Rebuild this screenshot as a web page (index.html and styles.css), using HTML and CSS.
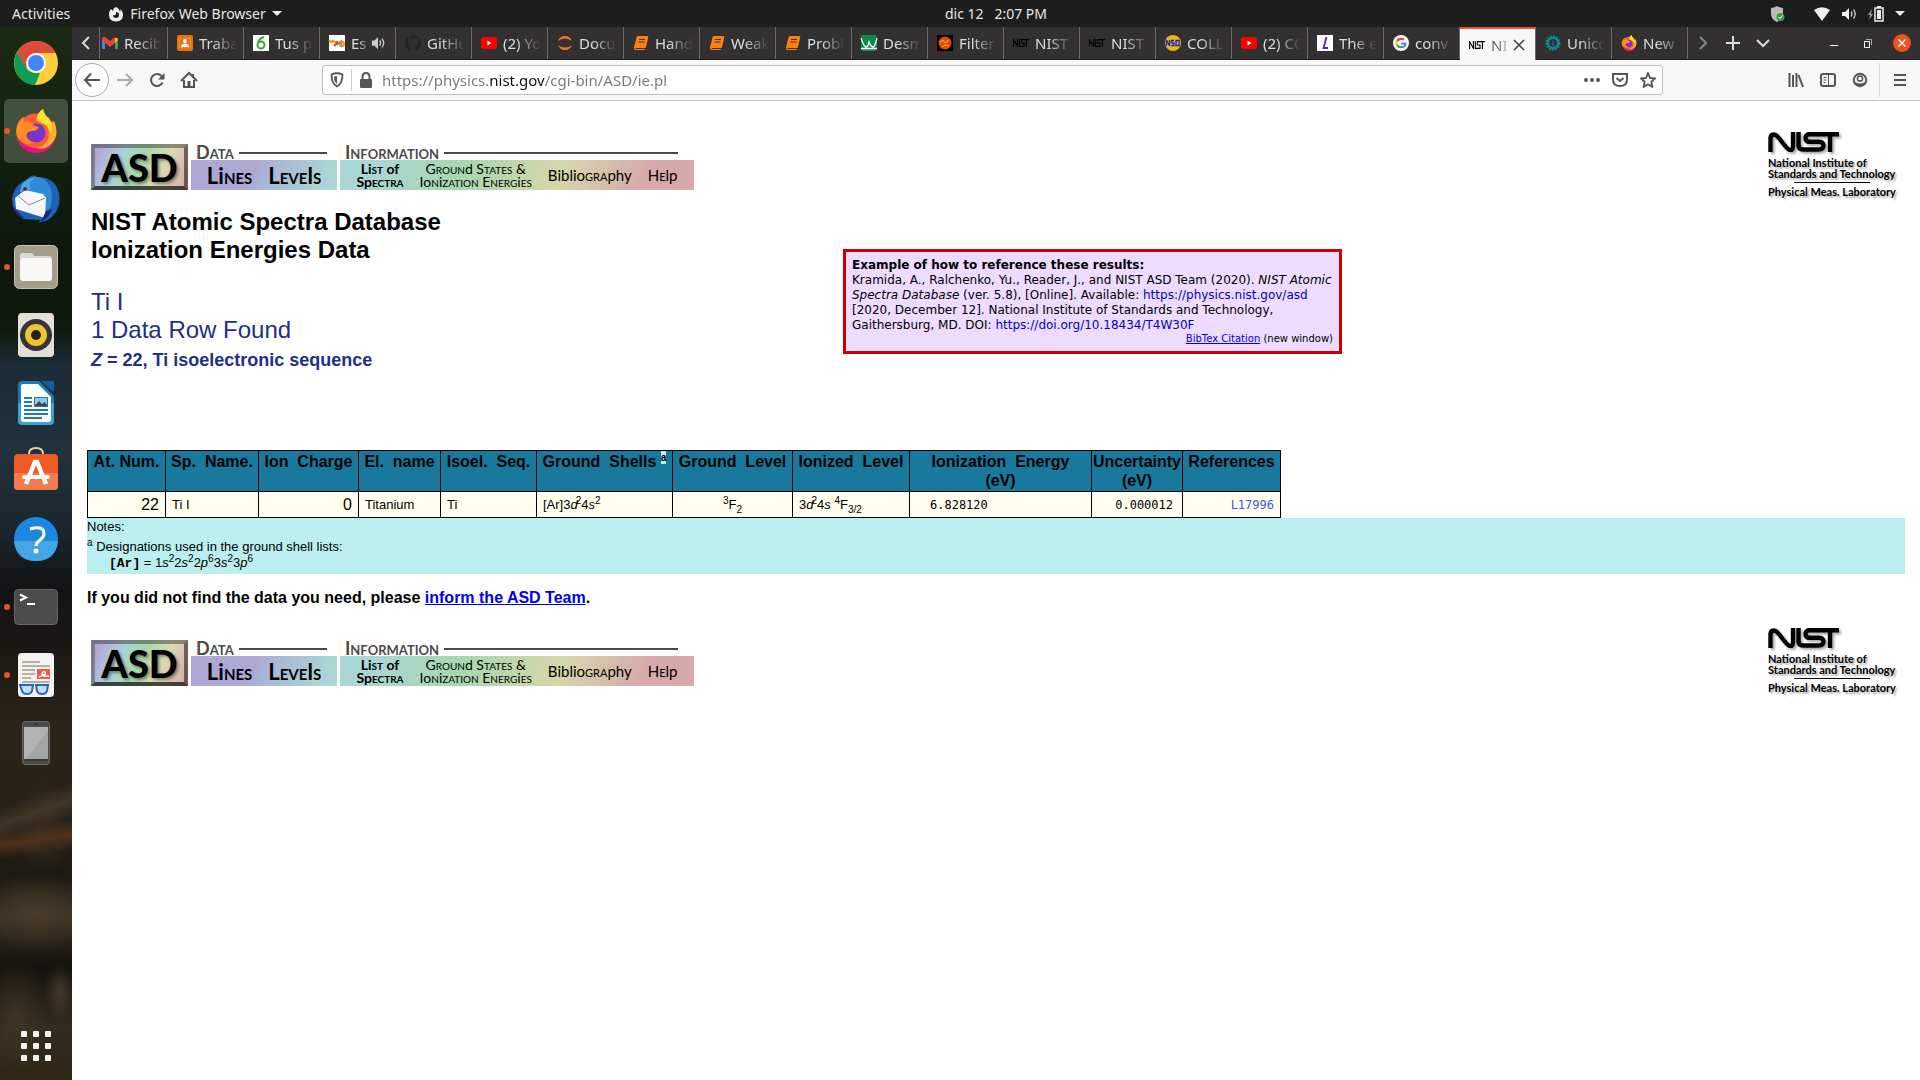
FILE: index.html
```html
<!DOCTYPE html>
<html lang="en">
<head>
<meta charset="utf-8">
<title>NIST: Ionization Energies Data</title>
<link rel="stylesheet" href="styles.css">
</head>
<body>
<svg class="defs" aria-hidden="true">
  <symbol id="nist" viewBox="0 0 72 20"><g fill="none" stroke="currentColor" stroke-width="4.4"><path d="M2.5 20V6.5Q2.5 2.5 6 2.5 8 2.5 10 5L18 15Q20.500 18 22.500 18 25 18 25 14V0"/><path d="M30.500 0V13Q30.500 17.500 35 17.500H50Q55.500 17.500 55.500 13.500T50 9.800H42Q37.500 9.800 37.500 6T42 2.300H71M62 2V20"/></g></symbol>
  <symbol id="nist-small" viewBox="0 0 16 8"><path fill="none" stroke="currentColor" stroke-width="1.100" d="M.6 8V.6L4.400 7.400V0M6.300 0V7.400H11V4H8.300V.6H16M13.400 .6V8"/></symbol>
  <symbol id="book" viewBox="0 0 16 16"><path fill="#ff7f0e" d="M5 1h9.500q1 0 .8 1l-2.300 10q-.3 1-1.300 1H3q-1 .3-.3 1h9.300l-.4 1H2.500Q.5 14.500 1 12.500L3.500 2.500Q4 1 5 1z"/><path stroke="#323031" stroke-width="1.200" d="M6 4.500h6M5.500 7h6"/></symbol>
  <symbol id="yt" viewBox="0 0 16 16"><rect y="2" width="16" height="12" rx="3" fill="#f00"/><path fill="#fff" d="M6.500 5.500l4 2.500-4 2.500z"/></symbol>
  <symbol id="flame" viewBox="0 0 44 44"><circle cx="22" cy="24" r="19.500" fill="#ff5a36"/><path fill="#e8127b" d="M3 27q4 17 19 17t19-15q-8 11-20 10T3 27z"/><path fill="#ffb028" d="M22 12Q23 3 29 0q1 6 6 9l2 5 3-2q6 13-2 22-7 8-16 5 13-3 13-14 0-10-13-13z"/><path fill="#ffe22e" d="M23 11Q23 4 29 0q1 6 6 10 5 7 2 15-2-9-9-11z"/><circle cx="22" cy="24" r="9.500" fill="#7336c9"/><path fill="#ff8b22" d="M3 17Q5 10 10 8q-1 4 1 5 4-2 7 1 1 3 7 4-1 3-6 4-6 0-7 5 1 6 9 6-9 5-15-2-6-5-3-14z"/></symbol>
</svg>

<header class="topbar">
  <nav class="topbar-left">
    <button>Activities</button>
    <button class="app"><svg class="i16" viewBox="0 0 16 16"><path fill="#eee" d="M8 1q-3 1-3 4L3 3Q1 5 1 9q0 6 7 6.500Q15 15 15 9q0-4-3-6 1 2 0 3-1-4-4-5zM8 6q3 0 3 3t-3 3-3-3q2 1 3-1z"/></svg>Firefox Web Browser <i class="caret"></i></button>
  </nav>
  <button class="clock">dic 12&nbsp;&nbsp; 2:07 PM</button>
  <div class="status">
    <svg class="i16" viewBox="0 0 16 16"><path fill="#bbb" d="M8 0q3 2 6 2v6q0 5-6 8-6-3-6-8V2q3 0 6-2z"/><circle cx="11.500" cy="11" r="4" fill="#35a345"/><path fill="none" stroke="#fff" d="M9.500 11l1.500 1.500 2.500-3"/></svg>
    <svg class="i16 wifi" viewBox="0 0 16 16"><path fill="#eee" d="M0 4q8-5.500 16 0L8 15z"/></svg>
    <svg class="i16" viewBox="0 0 16 16"><path fill="#eee" d="M1 6h3l4-4v12l-4-4H1z"/><path fill="none" stroke="#ccc" stroke-width="1.300" d="M10 5.500q2 2.500 0 5M12.500 3.500q3.500 4.500 0 9"/></svg>
    <svg class="i16" viewBox="0 0 16 16"><path fill="#999" d="M4 3L0 9h2l-1 5 4-6H3z"/><path fill="#eee" d="M9 4h4v9H9z"/><path fill="none" stroke="#eee" stroke-width="1.500" d="M7 2h8v13H7zM9 .7h4"/></svg>
    <i class="caret"></i>
  </div>
</header>

<div class="desktop">
<aside class="dock">
  <a href="#" class="launcher" aria-label="Chrome"><svg viewBox="0 0 44 44"><circle cx="22" cy="22" r="22" fill="#ffcd40"/><path fill="#dd4b3e" d="M3 11Q9 0 22 0q14 0 19.500 12H22L12 27z"/><path fill="#0f9d58" d="M3 11l10 17q4 5 13 4l-5 12Q7 43 2 31-2 20 3 11z"/><circle cx="22" cy="22" r="10" fill="#f4f4f4"/><circle cx="22" cy="22" r="8" fill="#4387f5"/></svg></a>
  <a href="#" class="launcher current running" aria-label="Firefox"><svg viewBox="0 0 44 44"><use href="#flame"/></svg></a>
  <a href="#" class="launcher" aria-label="Thunderbird"><svg class="wide" viewBox="0 0 48 48"><path fill="#1c62b7" d="M14 5Q21-2 25 2q18 0 22 16 3 17-11 27l-10 3 3-3-18-1Q0 37 0 25 1 11 14 5z"/><path fill="#2f8ad8" d="M14 5q12-7 21 2 7 8 4 24l-6 12-6-20-15-9z"/><path fill="#f6f6f6" d="M3 23l10-8 18 4 3 4-1 20L4 34z"/><path fill="none" stroke="#888" d="M5 20l12 10 16-7"/><path fill="#4aa6e6" d="M8 18q0-14 16-16-9 5-5 12l-6 1q-3 0-5 3z"/><circle cx="13" cy="14" r="2" fill="#533"/><path fill="#2b1e7c" d="M1 31q2 10 12 13Q7 38 4 35zM40 34q-2 8-11 13 3-7 5-11z"/></svg></a>
  <a href="#" class="launcher running" aria-label="Files"><svg viewBox="0 0 44 44"><rect x=".5" y=".5" width="43" height="43" rx="5" fill="#a69c8a" stroke="#c9c2b5"/><path fill="#ddd9d0" d="M6 14v-4q0-2 2-2h9q2 0 3 3h15q3 0 3 3z"/><rect x="6" y="13" width="32" height="23" rx="3" fill="#f8f7f6"/></svg></a>
  <a href="#" class="launcher" aria-label="Rhythmbox"><svg viewBox="0 0 44 44"><rect x="4" width="36" height="44" rx="4" fill="#e4dfd5"/><circle cx="22" cy="22" r="16" fill="#34343c"/><circle cx="22" cy="22" r="11" fill="#f0c330"/><circle cx="22" cy="22" r="5" fill="#222"/></svg></a>
  <a href="#" class="launcher" aria-label="Writer"><svg viewBox="0 0 44 44"><path fill="#1e79b7" d="M8 0h17l15 15v25q0 4-4 4H8q-4 0-4-4V4q0-4 4-4z"/><path fill="#3f9ed8" d="M4 22h36v18q0 4-4 4H8q-4 0-4-4z"/><path fill="#fff" d="M9 3h15l13 13v23q0 2-2 2H9q-2 0-2-2V5q0-2 2-2z"/><path fill="#0d639d" d="M27 0h13v10q-3 0-4-2z"/><path stroke="#1e79b7" stroke-width="2" d="M10 17h8M10 21h8M10 25h8M10 29h24M10 33h24M10 37h18"/><path fill="#1e79b7" d="M20 16h14v10H20z"/><path fill="#8ec9ec" d="M21 17h12v6H21z"/><path fill="#444" d="M21 25l4-5 3 3 3-2 2 4z"/></svg></a>
  <a href="#" class="launcher" aria-label="Software"><svg viewBox="0 0 44 44"><path fill="none" stroke="#e9cf9d" stroke-width="2" d="M15 8V5q0-6 7-6t7 6v3"/><rect y="5" width="44" height="36" rx="4" fill="#f05a24"/><path fill="#f37c4d" d="M0 24h44v13q0 4-4 4H4q-4 0-4-4z"/><path fill="none" stroke="#fff" stroke-width="4.500" d="M12 35l9-22h2l9 22"/><path stroke="#fff" stroke-width="4" stroke-linecap="round" d="M10 28h24"/></svg></a>
  <a href="#" class="launcher" aria-label="Help"><svg viewBox="0 0 44 44"><circle cx="22" cy="22" r="22" fill="#1b87dd"/><path fill="#43a5e6" d="M0 24h44q-2 20-22 20T0 24z"/><path fill="none" stroke="#fff" stroke-width="3" d="M16 12q14-4 14 5 0 3-4 6-4 3-4 6"/><circle cx="22" cy="34" r="2.500" fill="#fff"/></svg></a>
  <a href="#" class="launcher running" aria-label="Terminal"><svg viewBox="0 0 44 44"><rect x=".5" y="4.500" width="43" height="35" rx="4" fill="#4b4b4b" stroke="#666"/><path fill="none" stroke="#fff" stroke-width="2" d="M6 9.500l6 3-6 3M13 19h8"/></svg></a>
  <a href="#" class="launcher running" aria-label="Document viewer"><svg viewBox="0 0 44 44"><rect x="4" width="36" height="44" rx="4" fill="#f3f3f2"/><path stroke="#b8b0a2" stroke-width="2" d="M8 9h18M8 13h28M8 17h13M8 21h13M8 25h9M8 29h28"/><path fill="#f2594b" d="M23 16h13v10H23z"/><path fill="none" stroke="#fff" stroke-width="1.500" d="M25 24q8-2 6-5-3-1-3 2 1 3 7 2"/><path fill="#c8ddf2" stroke="#2568ba" stroke-width="2" d="M6 32h13l-1 6q-1 3-5 3t-5-3zM34 32H22l1 6q1 3 5 3t5-3z"/></svg></a>
  <a href="#" class="launcher" aria-label="Phone"><svg viewBox="0 0 44 44"><rect x="8.500" y=".5" width="27" height="43" rx="3" fill="#4c4c4c" stroke="#666"/><path fill="#b2b2b2" d="M10 6h24v32H10z"/><path fill="#a5a5a5" d="M34 10v28H12z"/><path stroke="#222" d="M20 3h4M10 39h24"/></svg></a>
  <button class="apps" aria-label="Show applications"><i></i><i></i><i></i><i></i><i></i><i></i><i></i><i></i><i></i></button>
</aside>

<section class="window">
  <div class="tabs">
    <button class="scroll" aria-label="Scroll tabs left"><svg class="i16" viewBox="0 0 16 16"><path fill="none" stroke="#ddd" stroke-width="2" d="M11 2L5 8l6 6"/></svg></button>
    <a href="#" class="tab first"><svg class="i16" viewBox="0 0 16 16"><path fill="#4285f4" d="M0 4h3v10H1q-1 0-1-1z"/><path fill="#34a853" d="M13 5h3v8q0 1-1 1h-2z"/><path fill="#fbbc04" d="M13 3q3-1 3 2l-3 3z"/><path fill="#ea4335" d="M0 4q0-3 3-2l5 4 5-4v6l-5 4-5-4z"/></svg><span>Recib</span></a>
    <a href="#" class="tab"><svg class="i16" viewBox="0 0 16 16"><rect width="16" height="16" rx="2" fill="#e8710a"/><path fill="none" stroke="#fff3" d="M2.500 3.500h11v9h-11z"/><circle cx="8" cy="6" r="2" fill="#fff"/><path fill="#fff" d="M4 12q0-3.500 4-3.500t4 3.500z"/></svg><span>Traba</span></a>
    <a href="#" class="tab"><svg class="i16" viewBox="0 0 16 16"><path fill="#fff" d="M0 0h16v16H0z"/><circle cx="8" cy="10" r="3.500" fill="none" stroke="#47a141" stroke-width="2"/><path fill="none" stroke="#47a141" stroke-width="2" d="M5 9q0-5 6-7"/></svg><span>Tus p</span></a>
    <a href="#" class="tab"><svg class="i16" viewBox="0 0 16 16"><path fill="#fff" d="M0 0h16v16H0z"/><path fill="none" stroke="#f29100" stroke-width="2" d="M0 5q2 4 4 0M4 6q3 2 5 0"/><path stroke="#e53935" stroke-width="2" d="M5 11l4-4"/><path fill="none" stroke="#2779c9" stroke-width="1.500" d="M8 10l4-4v6"/><circle cx="13" cy="9" r="2" fill="none" stroke="#fb8c00" stroke-width="2"/></svg><span class="short">Es</span><svg class="i16 sound" viewBox="0 0 16 16"><path fill="#ccc" d="M1 5h3l4-4v14l-4-4H1z"/><path fill="none" stroke="#ccc" stroke-width="1.500" d="M10 5q2 3 0 6M12.500 3q4 5 0 10"/></svg></a>
    <a href="#" class="tab"><svg class="i16" viewBox="0 0 16 16"><path fill="#202529" d="M8 0a8 8 0 0 0-2.500 15.600v-3Q3 13 2.500 11l2 .5 1.500-.5Q2.500 10 3 6l.5-3L6 4h4l2.500-1 .5 3q.5 4-3 5l.5 4.600A8 8 0 0 0 8 0z"/></svg><span>GitHu</span></a>
    <a href="#" class="tab"><svg class="i16"><use href="#yt"/></svg><span>(2) Yo</span></a>
    <a href="#" class="tab"><svg class="i16" viewBox="0 0 16 16"><path fill="#f37726" d="M1 6Q3 1 8 1t7 5Q12 3.500 8 3.500T1 6zM1 10q2 5 7 5t7-5q-3 2.500-7 2.500T1 10z"/></svg><span>Docu</span></a>
    <a href="#" class="tab"><svg class="i16"><use href="#book"/></svg><span>Hand</span></a>
    <a href="#" class="tab"><svg class="i16"><use href="#book"/></svg><span>Weak</span></a>
    <a href="#" class="tab"><svg class="i16"><use href="#book"/></svg><span>Probl</span></a>
    <a href="#" class="tab"><svg class="i16" viewBox="0 0 16 16"><rect width="16" height="16" rx="2" fill="#0a8a4b"/><path fill="none" stroke="#fff" stroke-width="1.300" d="M0 3q3 9 5 9t3-5q2 5 4 5t4-9M0 13.500h16"/></svg><span>Desm</span></a>
    <a href="#" class="tab"><svg class="i16" viewBox="0 0 16 16"><path d="M0 0h16v16H0z"/><circle cx="8" cy="8" r="6.500" fill="#e9470b"/><path fill="none" stroke="#fb3" d="M3 7l3-2 2 3 4-3M5 12l3-2 4 1"/></svg><span>Filter</span></a>
    <a href="#" class="tab"><svg class="i16 black"><use href="#nist-small"/></svg><span>NIST</span></a>
    <a href="#" class="tab"><svg class="i16 black"><use href="#nist-small"/></svg><span>NIST</span></a>
    <a href="#" class="tab"><svg class="i16" viewBox="0 0 16 16"><circle cx="8" cy="8" r="8" fill="#edb60c"/><path fill="none" stroke="#1722c4" stroke-width="1.300" d="M1.500 11V5l3 6V5M9 5.500H6.500v2.300H9v2.700H6M11 5.500h3v5h-3z"/></svg><span>COLL</span></a>
    <a href="#" class="tab"><svg class="i16"><use href="#yt"/></svg><span>(2) CO</span></a>
    <a href="#" class="tab"><svg class="i16" viewBox="0 0 16 16"><path fill="#fff" d="M0 0h16v16H0z"/><path fill="none" stroke="#5b14e8" stroke-width="1.800" d="M9.500 2l-3 11H11"/></svg><span>The e</span></a>
    <a href="#" class="tab"><svg class="i16" viewBox="0 0 16 16"><circle cx="8" cy="8" r="8" fill="#fff"/><g fill="none" stroke-width="2.200"><path stroke="#ea4335" d="M4 6q2-3.500 7-1.500"/><path stroke="#fbbc05" d="M4 6q-1 2 0 4"/><path stroke="#34a853" d="M4 10q2 3.500 7 1.500"/><path stroke="#4285f4" d="M11 11.500q1.500-1 1.500-3H8"/></g></svg><span>conv</span></a>
    <a href="#" class="tab active"><svg class="i16 black"><use href="#nist-small"/></svg><span class="short">NI</span><svg class="i16" viewBox="0 0 16 16"><path fill="none" stroke="#444" stroke-width="1.600" d="M3 3l10 10M13 3L3 13"/></svg></a>
    <a href="#" class="tab"><svg class="i16" viewBox="0 0 16 16"><circle cx="8" cy="8" r="6.500" fill="none" stroke="#0d8c9b" stroke-width="2" stroke-dasharray="2 1"/><circle cx="8" cy="8" r="5" fill="none" stroke="#0d8c9b" stroke-width="2"/><path stroke="#0d8c9b" d="M8 6v5"/></svg><span>Unico</span></a>
    <a href="#" class="tab"><svg class="i16"><use href="#flame"/></svg><span>New</span></a>
    <div class="tab-tools">
      <button aria-label="Scroll tabs right"><svg class="i16" viewBox="0 0 16 16"><path fill="none" stroke="#888" stroke-width="2" d="M5 2l6 6-6 6"/></svg></button>
      <button aria-label="New tab"><svg class="i16" viewBox="0 0 16 16"><path stroke="#ddd" stroke-width="2" d="M8 1v14M1 8h14"/></svg></button>
      <button aria-label="All tabs"><svg class="i16" viewBox="0 0 16 16"><path fill="none" stroke="#ddd" stroke-width="2" d="M2 5l6 6 6-6"/></svg></button>
    </div>
    <div class="win-tools">
      <button aria-label="Minimize"><svg class="i16" viewBox="0 0 16 16"><path stroke="#fff" d="M4 10.500h8"/></svg></button>
      <button aria-label="Restore"><svg class="i16" viewBox="0 0 16 16"><path fill="none" stroke="#fff" d="M4.500 6.500h5v6h-5z"/><path fill="none" stroke="#aaa" d="M6 4.500h5.500V10"/></svg></button>
      <button class="close" aria-label="Close"><svg class="i16" viewBox="0 0 16 16"><path stroke="#fff" stroke-width="1.400" d="M4.500 4.500l7 7M11.500 4.500l-7 7"/></svg></button>
    </div>
  </div>

  <div class="toolbar">
    <div class="nav-buttons">
      <button class="back" aria-label="Back"><svg class="i16" viewBox="0 0 16 16"><path fill="none" stroke="#555" stroke-width="2" d="M16 8H1M7 1.500L1 8l6 6.500"/></svg></button>
      <button aria-label="Forward"><svg class="i16" viewBox="0 0 16 16"><path fill="none" stroke="#aaa" stroke-width="2" d="M0 8h15M9 2l6 6-6 6"/></svg></button>
      <button aria-label="Reload"><svg class="i16" viewBox="0 0 16 16"><path fill="none" stroke="#555" stroke-width="2" d="M13.500 10.500A6 6 0 1 1 12.500 4"/><path fill="#555" d="M15.500 1v6.500H9z"/></svg></button>
      <button aria-label="Home"><svg class="i16" viewBox="0 0 16 16"><path fill="none" stroke="#555" stroke-width="2" d="M0 9l8-8 8 8M3 8v7h10V8"/><path fill="#555" d="M6.500 9h3v6h-3zM11 2h2v4h-2z"/></svg></button>
    </div>
    <div class="urlbar">
      <svg class="i16" viewBox="0 0 16 16"><path fill="none" stroke="#555" stroke-width="1.800" d="M2.500 2.500Q8 0 13.500 2.500q0 9-5.500 12Q2.500 11.500 2.500 2.500z"/><path fill="#555" d="M8 4v8Q5 10 5 4.500z"/></svg>
      <i class="divider"></i>
      <svg class="i16" viewBox="0 0 16 16"><rect x="2" y="7" width="12" height="9" rx="1" fill="#555"/><path fill="none" stroke="#555" stroke-width="2" d="M4.500 8V5q0-4 3.500-4t3.500 4v3"/></svg>
      <input type="text" aria-label="Address" value="https://physics.nist.gov/cgi-bin/ASD/ie.pl">
      <button aria-label="Page actions"><svg class="i16" viewBox="0 0 16 16"><path stroke="#555" stroke-width="4" stroke-linecap="round" stroke-dasharray="0 6" d="M2 8h13"/></svg></button>
      <button aria-label="Pocket"><svg class="i16" viewBox="0 0 16 16"><path fill="none" stroke="#555" stroke-width="2" d="M1 2h14v5q0 7-7 7T1 7zM4.500 6L8 9l3.500-3"/></svg></button>
      <button aria-label="Bookmark"><svg class="i16" viewBox="0 0 16 16"><path fill="none" stroke="#555" stroke-width="1.800" stroke-linejoin="round" d="M8 1l2 5 5 .5-3.800 3.500L12.500 15 8 12.300 3.500 15l1.300-5L1 6.500 6 6z"/></svg></button>
    </div>
    <div class="tools">
      <button aria-label="Library"><svg class="i16" viewBox="0 0 16 16"><path stroke="#555" stroke-width="2" d="M1.500 1v14M5 3v12M8.500 1v14M10.500 3l4.500 12"/></svg></button>
      <button aria-label="Sidebar"><svg class="i16" viewBox="0 0 16 16"><rect x="1" y="2" width="14" height="12" rx="2" fill="none" stroke="#555" stroke-width="2"/><path stroke="#555" d="M8.500 2v12M3.500 5.500h3M3.500 8h3M3.500 10.500h2"/></svg></button>
      <button aria-label="Account"><svg class="i16" viewBox="0 0 16 16"><circle cx="8" cy="8" r="6.200" fill="none" stroke="#555" stroke-width="2"/><circle cx="8" cy="6.500" r="2.600" fill="none" stroke="#555" stroke-width="1.500"/><path fill="#555" d="M3 10q5 3 10 0l-2 4H5z"/></svg></button>
      <button class="menu" aria-label="Menu"><svg class="i16" viewBox="0 0 16 16"><path stroke="#555" stroke-width="2" d="M2 3h12M2 8h12M2 13h12"/></svg></button>
    </div>
  </div>

  <main class="page">
    <div class="masthead">
      <nav class="asd">
        <a href="#" class="asd-logo">ASD</a>
        <div class="group data">
          <div class="label"><span>Data</span></div>
          <div class="links"><a href="#">Li<b>nes</b></a><a href="#">L<b>eve</b>l<b>s</b></a></div>
        </div>
        <div class="group info">
          <div class="label"><span>Information</span></div>
          <div class="links small"><a href="#" class="strong">Li<b>st</b> of<br>Sp<b>ectra</b></a><a href="#">G<b>roun</b>d S<b>tates</b> &amp;<br>Io<b>n</b>i<b>zation</b> E<b>nerg</b>i<b>es</b></a><a href="#" class="mid">Biblio<b>gra</b>phy</a><a href="#" class="mid">H<b>e</b>lp</a></div>
        </div>
      </nav>
      <a href="#" class="nist" aria-label="NIST"><svg viewBox="0 0 72 20"><use href="#nist"/></svg><span>National Institute of<br>Standards and Technology</span><hr><span>Physical Meas. Laboratory</span></a>
    </div>

    <div class="intro">
      <div class="titles">
        <h1>NIST Atomic Spectra Database<br>Ionization Energies Data</h1>
        <p class="found">Ti I<br>1 Data Row Found</p>
        <p class="sequence"><i>Z</i> = 22, Ti isoelectronic sequence</p>
      </div>
      <div class="cite">
        <strong>Example of how to reference these results:</strong>
        <p>Kramida, A., Ralchenko, Yu., Reader, J., and NIST ASD Team (2020). <i>NIST Atomic Spectra Database</i> (ver. 5.8), [Online]. Available: <a href="#">https://physics.nist.gov/asd</a> [2020, December 12]. National Institute of Standards and Technology, Gaithersburg, MD. DOI: <a href="#">https://doi.org/10.18434/T4W30F</a></p>
        <div class="bibtex"><a href="#">BibTex Citation</a> (new window)</div>
      </div>
    </div>

    <table class="results">
      <colgroup><col class="c78"><col class="c93"><col class="c100"><col class="c82"><col class="c96"><col class="c136"><col class="c120"><col class="c117"><col class="c182"><col class="c91"><col class="c98"></colgroup>
      <thead><tr><th>At. Num.</th><th>Sp.&nbsp; Name.</th><th>Ion&nbsp; Charge</th><th>El.&nbsp; name</th><th>Isoel.&nbsp; Seq.</th><th>Ground&nbsp; Shells <sup>a</sup></th><th>Ground&nbsp; Level</th><th>Ionized&nbsp; Level</th><th>Ionization&nbsp; Energy<br>(eV)</th><th>Uncertainty<br>(eV)</th><th>References</th></tr></thead>
      <tbody><tr><td class="num">22</td><td>Ti I</td><td class="num">0</td><td>Titanium</td><td>Ti</td><td>[Ar]3<i>d</i><sup class="close-up">2</sup>4<i>s</i><sup>2</sup></td><td class="mid"><sup>3</sup>F<sub>2</sub></td><td>3<i>d</i><sup class="close-up">2</sup>4<i>s</i> <sup>4</sup>F<sub>3/2</sub></td><td class="mono energy">6.828120</td><td class="mono right">0.000012</td><td class="mono ref"><a href="#">L17996</a></td></tr></tbody>
    </table>
    <div class="notes">
      <p>Notes:</p>
      <p class="designations"><sup>a</sup> Designations used in the ground shell lists:</p>
      <p class="shell"><code>[Ar]</code> = 1<i>s</i><sup>2</sup>2<i>s</i><sup>2</sup>2<i>p</i><sup>6</sup>3<i>s</i><sup>2</sup>3<i>p</i><sup>6</sup></p>
    </div>
    <p class="inform">If you did not find the data you need, please <a href="#">inform the ASD Team</a>.</p>

    <div class="masthead">
      <nav class="asd">
        <a href="#" class="asd-logo">ASD</a>
        <div class="group data">
          <div class="label"><span>Data</span></div>
          <div class="links"><a href="#">Li<b>nes</b></a><a href="#">L<b>eve</b>l<b>s</b></a></div>
        </div>
        <div class="group info">
          <div class="label"><span>Information</span></div>
          <div class="links small"><a href="#" class="strong">Li<b>st</b> of<br>Sp<b>ectra</b></a><a href="#">G<b>roun</b>d S<b>tates</b> &amp;<br>Io<b>n</b>i<b>zation</b> E<b>nerg</b>i<b>es</b></a><a href="#" class="mid">Biblio<b>gra</b>phy</a><a href="#" class="mid">H<b>e</b>lp</a></div>
        </div>
      </nav>
      <a href="#" class="nist" aria-label="NIST"><svg viewBox="0 0 72 20"><use href="#nist"/></svg><span>National Institute of<br>Standards and Technology</span><hr><span>Physical Meas. Laboratory</span></a>
    </div>
  </main>
</section>
</div>
</body>
</html>
```
FILE: styles.css
```css
* { box-sizing: border-box; }
body { margin: 0; min-height: 100vh; display: flex; flex-direction: column; font-family: "Liberation Sans", Arial, sans-serif; background: #fff; color: #000; }
button { font: inherit; color: inherit; background: none; border: 0; padding: 0; display: flex; align-items: center; justify-content: center; }
p, h1 { margin: 0; }
svg { display: block; flex: none; overflow: visible; }
.defs { width: 0; height: 0; position: absolute; }
.i16 { width: 16px; height: 16px; }

/* Desktop top bar */
.topbar { height: 27px; background: #1d1d1d; color: #e6e6e6; font: 14px "Noto Sans", sans-serif; display: grid; grid-template-columns: 1fr auto 1fr; align-items: center; }
.topbar-left { display: flex; gap: 38px; padding-left: 12px; }
.app { gap: 6px; }
.clock { padding-left: 72px; }
.caret { width: 0; height: 0; border: 5px solid transparent; border-top-color: #eee; border-bottom: 0; }
.status { display: flex; justify-content: flex-end; align-items: center; gap: 11px; padding-right: 15px; }
.wifi { margin-left: 18px; }

.desktop { flex: 1; display: flex; }

/* Dock */
.dock { width: 72px; flex: none; display: flex; flex-direction: column; align-items: center; gap: 4px; padding: 4px 0 19px;
  background:
    radial-gradient(ellipse 30px 50px at 45px 800px, #4a3d2866, transparent),
    radial-gradient(ellipse 60px 40px at 36px 885px, #4f422dbb, transparent),
    radial-gradient(ellipse 32px 60px at 16px 990px, #453c2899, transparent),
    radial-gradient(ellipse 16px 30px at 60px 965px, #584b3599, transparent),
    linear-gradient(172deg, transparent 795px, #6a3c1899 810px, transparent 825px),
    linear-gradient(160deg, transparent 735px, #54483588 750px, transparent 765px),
    linear-gradient(#1b2a12 0, #14230f 100px, #0e160d 230px, #10190d 300px, #1b2c36 340px, #22323c 430px, #1b262d 500px, #131415 560px, #1b1713 620px, #2b241a 700px, #29221a 780px, #1c1913 850px, #383022 890px, #14120f 940px, #332b1e 1000px, #2e2615 100%); }
.launcher { width: 64px; height: 64px; flex: none; display: flex; align-items: center; justify-content: center; border-radius: 5px; position: relative; }
.launcher svg { width: 44px; height: 44px; }
.launcher .wide { width: 48px; height: 48px; }
.current { background: #ffffff33; }
.running::before { content: ""; position: absolute; left: 0; top: 29px; width: 6px; height: 6px; border-radius: 50%; background: #e95420; }
.apps { margin-top: auto; display: grid; grid-template-columns: repeat(3, 6px); gap: 6px; }
.apps i { width: 6px; height: 6px; border-radius: 1px; background: #f2f2f2; }

/* Browser chrome */
.window { flex: 1; min-width: 0; display: flex; flex-direction: column; }
.tabs { height: 33px; background: #323031; color: #ddd; display: flex; border-bottom: 1px solid #1d1b1c; font: 15px "Noto Sans", sans-serif; }
.scroll { width: 28px; flex: none; border-right: 1px solid #6b6a6b; }
.tab { flex: 0 1 76px; min-width: 0; display: flex; align-items: center; gap: 6px; padding-left: 9px; border-right: 1px solid #6b6a6b; color: inherit; text-decoration: none; }
.tab.first { flex-basis: 68px; padding-left: 2px; }
.tab span { width: 38px; white-space: nowrap; mask-image: linear-gradient(90deg, #000 35%, transparent); }
.tab .short { width: 20px; }
.tab .sound { margin-left: -6px; width: 14px; }
.tab.active { background: #f7f7f7; color: #222; border-top: 2px solid #e95420; height: 33px; }
.tab.active .short { opacity: .7; width: 20px; margin-right: -6px; }
.black { color: #000; height: 8px; }
.tab-tools { display: flex; }
.tab-tools button { width: 30px; }
.win-tools { margin-left: auto; display: flex; gap: 16px; align-items: center; padding-right: 9px; }
.win-tools button { width: 18px; height: 18px; }
.win-tools .close { border-radius: 50%; background: #e95420; }

.toolbar { height: 41px; background: #f7f7f7; border-bottom: 1px solid #c4c4c4; display: flex; align-items: center; padding-left: 3px; }
.nav-buttons { display: flex; width: 247px; flex: none; }
.nav-buttons button { width: 32px; height: 34px; }
.nav-buttons .back { width: 34px; border: 1px solid #aaa; border-radius: 50%; background: #fff; }
.urlbar { flex: 0 1 1341px; min-width: 0; height: 30px; display: flex; align-items: center; gap: 12px; padding: 0 6px; border: 1px solid #c0c0c0; border-radius: 3px; background: #fff; }
.divider { width: 1px; height: 22px; margin: 0 -6px; background: #ccc; }
.urlbar input { flex: 1; min-width: 0; border: 0; outline: 0; padding: 0; height: 26px; margin-left: -4px; font: 15px "Noto Sans", sans-serif; color: transparent; background: linear-gradient(90deg, #777 107px, #111 107px 163px, #777 163px); background-clip: text; -webkit-background-clip: text; }
.tools { margin-left: auto; display: flex; align-items: center; }
.tools button { width: 32px; height: 34px; }
.tools .menu { width: 41px; border-left: 1px solid #ddd; margin-left: 3px; }

/* Page */
.page { flex: 1; padding: 31px 15px; }
.masthead { display: flex; justify-content: space-between; align-items: flex-start; height: 65px; padding-left: 4px; }
.asd { display: flex; gap: 3px; margin-top: 12px; height: 46px; font-family: Lato, sans-serif; }
.asd a { color: #000; text-decoration: none; }
.asd b { font-weight: inherit; font-variant: small-caps; }
.asd-logo { width: 97px; border: 4px solid; border-color: #33333377 #22222299 #111111bb #44444477; background: linear-gradient(115deg, #b1a8d6 10%, #a9d4d8 30%, #a8d6ac 50%, #dcdcae 70%, #d6a8a8) border-box; font-size: 38px; font-weight: 900; line-height: 38px; text-align: center; text-shadow: 2px 2px 3px #0006; }
.label { height: 16px; display: flex; align-items: center; gap: 5px; padding-left: 5px; color: #4a4a4a; font-size: 18px; line-height: 16px; font-weight: 700; font-variant: small-caps; }
.label::after { content: ""; flex: 1; height: 2px; margin-top: 2px; background: #4a4a4a; }
.data { width: 146px; }
.data .label { padding-right: 10px; }
.info { width: 354px; }
.info .label { padding-right: 16px; }
.links { height: 30px; display: flex; align-items: center; justify-content: center; gap: 16px; font-size: 22px; font-weight: 700; background: linear-gradient(115deg, #aca8d4 40%, #a9c0d6 65%, #aad6d6 90%); }
.links.small { font-size: 14px; line-height: 13px; font-weight: 400; gap: 16px; text-align: center; white-space: nowrap; background: linear-gradient(115deg, #aad6d6 10%, #a8d6ae 35%, #d6d6aa 62%, #d6aaaa 85%); }
.links .strong { font-weight: 700; }
.links .mid { font-size: 15px; }
.nist { width: 137px; color: #000; text-decoration: none; font: 700 11px/11px Lato, sans-serif; text-shadow: 2px 2px 2px #0005; white-space: nowrap; }
.nist svg { width: 72px; height: 20px; margin-bottom: 5px; filter: drop-shadow(2px 2px 1px #0005); }
.nist span { display: block; }
.nist hr { width: 76px; height: 1px; border: 0; margin: 3px 0 3px 26px; background: #000; }

.intro { display: grid; grid-template-columns: minmax(0, 756px) minmax(0, 499px); align-items: start; padding-top: 11px; }
.titles { padding-left: 4px; color: #232f86; }
h1 { font-size: 24px; line-height: 28px; color: #000; }
.found { font-size: 24px; line-height: 28px; margin-top: 24px; }
.sequence { font-size: 18px; line-height: 24px; font-weight: 700; margin-top: 4px; }
.cite { margin-top: 41px; border: 3px solid #c00; background: #eddcff; padding: 6px; font: 12px/15px "DejaVu Sans", sans-serif; }
.cite p a { color: #00c; text-decoration: none; }
.bibtex { font-size: 10px; line-height: 12px; text-align: right; }
a { color: #00e; }

.results { margin-top: 78px; width: 1194px; table-layout: fixed; border-collapse: collapse; font-size: 13px; }
.results th, .results td { border: 1px solid #000; }
.results th { background: #18799c; font-size: 16px; line-height: 19px; height: 41px; padding: 1px 0; vertical-align: top; white-space: nowrap; }
.results td { background: #fffeee; height: 26px; padding: 0 6px; }
.results sup, .results sub, .notes sup { font-size: 10px; line-height: 0; }
.results th sup { background: #bee; line-height: 1; padding: 1px 0; }
.close-up { margin-left: -2px; }
.results .num { font-size: 16px; text-align: right; }
.results .mid { text-align: center; }
.results .mono { font-family: "DejaVu Sans Mono", monospace; font-size: 12px; }
.results .energy { padding-left: 20px; }
.results .right { text-align: right; padding-right: 9px; }
.results .ref { text-align: right; }
.ref a { color: #3355ee; text-decoration: none; }
.c78 { width: 78px; } .c93 { width: 93px; } .c100 { width: 100px; } .c82 { width: 82px; } .c96 { width: 96px; } .c136 { width: 136px; } .c120 { width: 120px; } .c117 { width: 117px; } .c182 { width: 182px; } .c91 { width: 91px; } .c98 { width: 98px; }

.notes { background: #bee; font-size: 13px; line-height: 16px; padding: 1px 0 3px; }
.designations { padding-top: 4px; }
.shell { padding-left: 22px; }
.shell code { font: 700 13px "Liberation Mono", monospace; }
.inform { font-size: 16px; line-height: 20px; font-weight: 700; margin: 14px 0 20px; }
```
